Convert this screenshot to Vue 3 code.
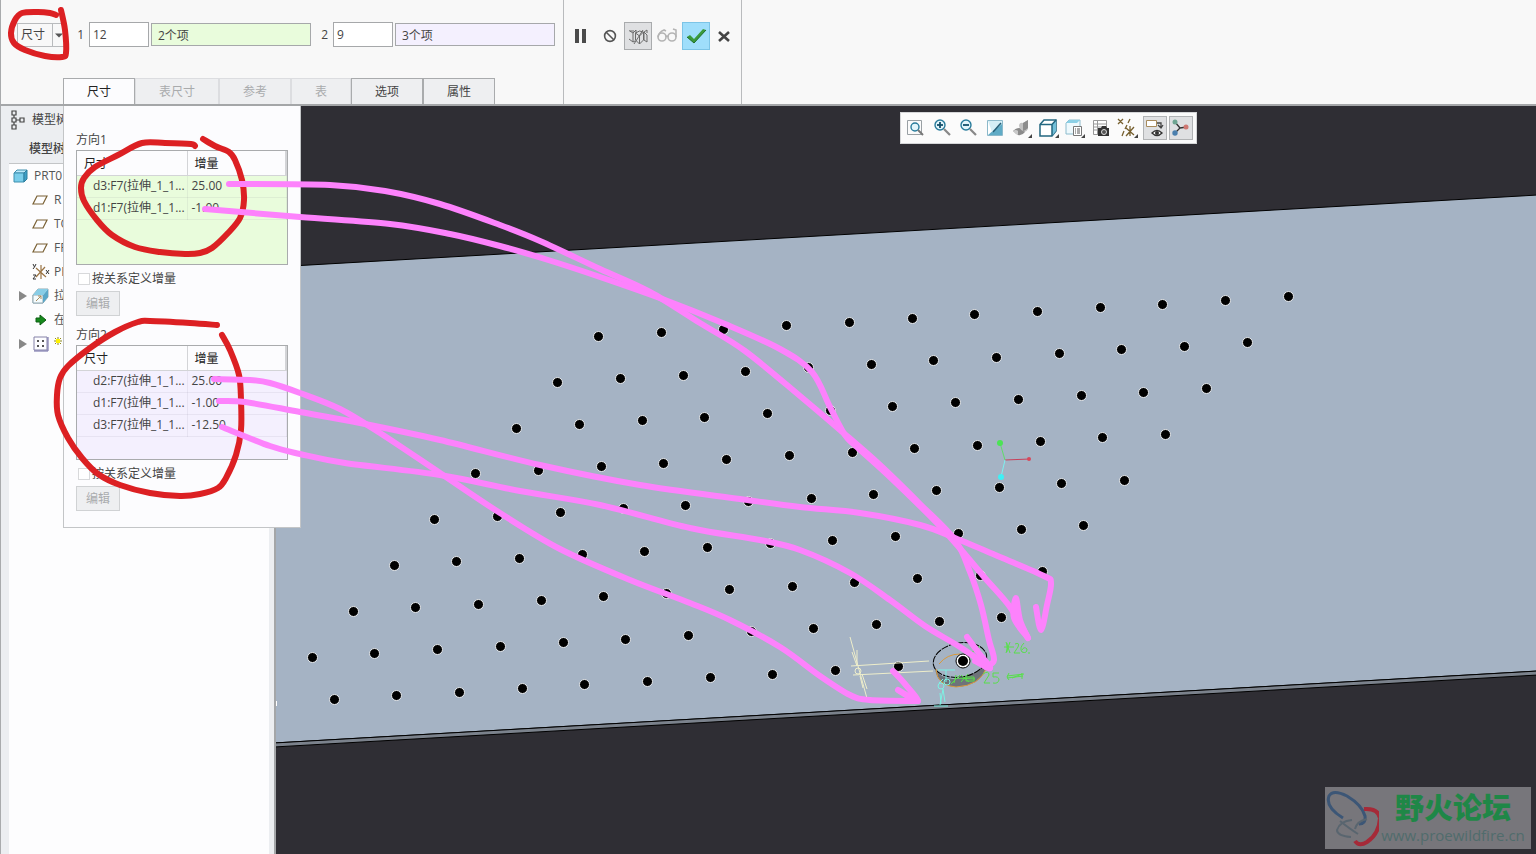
<script setup>
import { ref } from 'vue'

const mode = ref('尺寸')
const count1 = ref('12')
const count2 = ref('9')
const activeTab = ref('尺寸')

const tabs = [
  { name: '尺寸' },
  { name: '表尺寸', disabled: true },
  { name: '参考', disabled: true },
  { name: '表', disabled: true },
  { name: '选项' },
  { name: '属性' },
]

const directions = ref([
  {
    id: 1,
    title: '方向1',
    relation: false,
    rows: [
      ['d3:F7(拉伸_1_1...', '25.00'],
      ['d1:F7(拉伸_1_1...', '-1.00'],
    ],
  },
  {
    id: 2,
    title: '方向2',
    relation: false,
    rows: [
      ['d2:F7(拉伸_1_1...', '25.00'],
      ['d1:F7(拉伸_1_1...', '-1.00'],
      ['d3:F7(拉伸_1_1...', '-12.50'],
    ],
  },
])

const tree = [
  { icon: 'part', label: 'PRT0', root: true },
  { icon: 'plane', label: 'R' },
  { icon: 'plane', label: 'TO' },
  { icon: 'plane', label: 'FR' },
  { icon: 'csys', label: 'PR' },
  { icon: 'extrude', label: '拉', expand: true },
  { icon: 'insert', label: '在' },
  { icon: 'pattern', label: '', expand: true },
]

const views = [
  'refit', 'zoomin', 'zoomout', 'repaint', 'render', 'cube',
  'saved', 'manager', 'datum', 'annotation', 'spin',
]
const pressed = ['annotation', 'spin']
const withMenu = ['render', 'cube', 'saved', 'datum']

// pattern instances: 12 along the first direction, 9 along the second
const dots = []
for (let r = 0; r < 9; r++) {
  for (let c = 0; c < 12; c++) {
    if (r === 8 && (c === 0 || c === 11)) continue
    dots.push({
      x: Math.round(598 - 40.9 * r + 62.7 * c) + 0.5,
      y: Math.round(336 + 45.8 * r - 3.6 * c) + 0.5,
    })
  }
}

// Catmull-Rom through the points
function smooth(p) {
  let d = `M${p[0][0]} ${p[0][1]}`
  for (let i = 0; i < p.length - 1; i++) {
    const a = p[i - 1] || p[i]
    const b = p[i]
    const c = p[i + 1]
    const e = p[i + 2] || c
    d += `C${b[0] + (c[0] - a[0]) / 6} ${b[1] + (c[1] - a[1]) / 6}`
    d += ` ${c[0] - (e[0] - b[0]) / 6} ${c[1] - (e[1] - b[1]) / 6} ${c[0]} ${c[1]}`
  }
  return d
}

const redMarks = [
  [[56, 15], [50, 13], [38, 12], [22, 13], [15, 20], [11, 33], [14, 43], [25, 50], [45, 56], [62, 57], [66, 53], [65, 30], [61, 10]],
  [[195, 146], [191, 144], [165, 143], [142, 143], [118, 155], [95, 167], [84, 178], [81, 188], [84, 201], [97, 220], [112, 235], [135, 247], [160, 252], [185, 254], [200, 253], [212, 248], [228, 233], [240, 218], [244, 200], [242, 180], [235, 160], [229, 152], [215, 146], [203, 139]],
  [[217, 325], [190, 323], [150, 321], [138, 322], [115, 332], [90, 348], [68, 366], [60, 378], [57, 395], [58, 415], [68, 438], [82, 458], [98, 474], [120, 485], [150, 493], [180, 496], [200, 494], [218, 488], [226, 478], [236, 455], [241, 430], [241, 400], [239, 375], [230, 350], [222, 335]],
].map(smooth)

const pinkMarks = [
  [[229, 184], [330, 185], [385, 191], [440, 204], [500, 225], [540, 241], [600, 269], [650, 292], [700, 323], [745, 351], [800, 396], [840, 430], [880, 465], [920, 504], [955, 540], [970, 572], [981, 605], [989, 640], [994, 660], [986, 667]],
  [[205, 209], [300, 217], [390, 224], [450, 234], [500, 246], [545, 259], [600, 277], [665, 300], [725, 324], [780, 349], [812, 372], [830, 407], [845, 435], [857, 447], [890, 477], [930, 516], [957, 545], [985, 578], [1010, 607], [1028, 638]],
  [[1028, 638], [1020, 620], [1016, 598], [1014, 618], [1028, 638]],
  [[214, 379], [250, 380], [270, 383], [300, 393], [340, 409], [380, 433], [440, 473], [500, 513], [560, 549], [630, 580], [690, 603], [730, 620], [780, 647], [820, 676], [850, 695], [870, 700], [918, 701]],
  [[893, 671], [905, 684], [918, 701], [898, 690]],
  [[219, 401], [245, 402], [300, 412], [360, 423], [440, 440], [540, 465], [640, 485], [740, 499], [800, 507], [860, 513], [920, 525], [955, 538], [1000, 557], [1044, 576], [1051, 583], [1047, 605], [1041, 630], [1036, 607]],
  [[222, 427], [270, 446], [300, 454], [345, 463], [440, 475], [520, 491], [600, 505], [690, 528], [760, 540], [800, 550], [850, 573], [890, 600], [925, 626], [960, 647], [990, 668]],
  [[967, 637], [978, 652], [990, 668], [975, 661]],
].map(smooth)
</script>

<template>
  <div class="app">
    <header class="ribbon">
      <section class="dashboard">
        <div class="fields">
          <span class="combo">
            <select v-model="mode" aria-label="阵列类型">
              <option>尺寸</option>
            </select>
            <svg width="14" height="22" viewBox="0 0 14 22"><path d="M.5 0v22" stroke="#b9bbbd" /><path d="M3 9.500h8l-4 4z" fill="#555" /></svg>
          </span>
          <label for="count1">1</label>
          <input id="count1" v-model="count1" class="count">
          <input class="collector green" value="2个项" aria-label="方向 1 收集器" readonly>
          <label for="count2">2</label>
          <input id="count2" v-model="count2" class="count">
          <input class="collector violet" value="3个项" aria-label="方向 2 收集器" readonly>
        </div>
        <nav class="tabs">
          <button
            v-for="tab in tabs"
            :key="tab.name"
            :disabled="tab.disabled"
            :class="{ active: tab.name === activeTab }"
            @click="activeTab = tab.name"
          >{{ tab.name }}</button>
        </nav>
      </section>

      <section class="actions">
        <button aria-label="暂停"><svg width="28" height="28"><path d="M9 7h4v14H9zM16 7h4v14h-4z" fill="#4b4b4b" /></svg></button>
        <button aria-label="无预览"><svg width="28" height="28" fill="none" stroke="#555" stroke-width="1.600"><circle cx="15" cy="14" r="5.400" /><path d="M11 10l8 8" /></svg></button>
        <button class="pressed" aria-label="特征预览">
          <svg width="28" height="28" fill="none" stroke="#6b6b6b">
            <path d="M5 8.500l4 2.500v9l-4-3M9 11l3-3v3M6 9h4M11.500 11l4 3v8l-4-4zM15.500 14l4-4-4-1-4 2M15.500 22l4-4v-8M10 22L19 8M20 10l3-2v3M20 10v8l3 2v-7l-3-3M9 20l2-1" />
          </svg>
        </button>
        <button disabled aria-label="校验">
          <svg width="28" height="28" fill="none" stroke="#b4b4b4" stroke-width="1.600">
            <circle cx="9" cy="15" r="4" /><circle cx="19" cy="15" r="4" /><path d="M13 15q1-2 2 0M5 15q1-5 6-7l2 1M23 15V8l-3-1" />
          </svg>
        </button>
        <button class="ok" aria-label="确定"><svg width="28" height="28"><path d="M5 15l3-2 4 4L21 7l3 1-12 13z" fill="#3a9a3c" /><path d="M5 15l7 6L24 8" fill="none" stroke="#1f6f2b" /></svg></button>
        <button aria-label="取消"><svg width="28" height="28"><path d="M8 10l10 9M18 10L8 19" stroke="#444" stroke-width="2.600" /></svg></button>
      </section>
    </header>

    <main class="workspace">
      <aside class="sidebar">
        <div class="side-title">
          <svg width="14" height="20" viewBox="0 0 14 20" fill="none" stroke="#444" stroke-width="1.200"><path d="M1 1h4v4H1zM1 8h4v4H1zM1 15h4v4H1zM9 8h4v4H9zM3 5v3M3 12v3M5 10h4" /></svg>
          <span>模型树</span>
        </div>
        <div class="side-sub">模型树</div>
        <ul class="tree">
          <li v-for="(node, i) in tree" :key="i" :class="{ root: node.root }">
            <span v-if="!node.root" class="twist">
              <svg v-if="node.expand" width="8" height="10"><path d="M0 0l8 5-8 5z" fill="#888" /></svg>
            </span>
            <svg class="node-icon" width="18" height="18" viewBox="0 0 18 18" fill="none">
              <template v-if="node.icon === 'part'">
                <path d="M3 6l3-3h10l-3 3z" fill="#bdeafb" stroke="#3e8fae" /><path d="M3 6h10v9H3z" fill="#79cdea" stroke="#3e8fae" /><path d="M13 6l3-3v9l-3 3z" fill="#3d9fc6" stroke="#2f7f9e" />
              </template>
              <path v-else-if="node.icon === 'plane'" d="M5 5h10l-4 8H1z" stroke="#7a6135" stroke-width="1.200" />
              <template v-else-if="node.icon === 'csys'">
                <path d="M4 5l10 9M13 4L4 14M9 2v14" stroke="#9a7444" stroke-width="1.200" /><path d="M1 1l1.500 3L4 1M2.500 4L1 6M1 12h3l-3 4h3M14 7l3 4M17 7l-3 4" stroke="#333" />
              </template>
              <template v-else-if="node.icon === 'extrude'">
                <path d="M1 8l5-6h10v8l-5 6H1z" fill="#dff0f7" stroke="#91a8b1" /><path d="M1 8h10v8H1z" fill="#f4fbfd" stroke="#91a8b1" /><path d="M11 8l5-6v8l-5 6z" fill="#5aa7c8" /><path d="M1 8l5-6h10l-5 6z" fill="#88cde6" /><path d="M4 14l5-5M9 9v3M9 9H6" stroke="#a88b5c" />
              </template>
              <path v-else-if="node.icon === 'insert'" d="M4 7h4V4l6 5-6 5v-3H4z" fill="#168a1c" stroke="#0c5e12" />
              <template v-else>
                <path d="M2 2h13v13H2z" fill="#fdfdff" stroke="#8582a8" /><path d="M16 2v14H2" stroke="#6965a0" /><path d="M5 5h2v2H5zM10 5h2v2h-2zM5 10h2v2H5zM10 10h2v2h-2z" fill="#555" />
              </template>
            </svg>
            <svg v-if="node.icon === 'pattern'" class="spark" width="8" height="8"><path d="M4 0v8M0 4h8M1 1l6 6M7 1L1 7" stroke="#8f8a1c" /><path d="M2 2h4v4H2z" fill="#fff200" /></svg>
            <span>{{ node.label }}</span>
          </li>
        </ul>
      </aside>

      <section class="viewport">
        <svg class="scene" viewBox="276 106 1260 748" preserveAspectRatio="xMinYMin slice">
          <path d="M274 267L1538 195V671L274 743z" fill="#a5b3c4" stroke="#000" />
          <path d="M274 743L1538 671v4L274 747z" fill="#7b828c" stroke="#000" />
          <circle v-for="(dot, i) in dots" :key="i" :cx="dot.x" :cy="dot.y" r="5" fill="#000" stroke="#e8ebee" />
          <path d="M276.500 701v5" stroke="#fff" />

          <path d="M1005 460l25-1" stroke="#c8405a" /><circle cx="1029" cy="459" r="2" fill="#d8485a" />
          <path d="M1005 460l-5-17" stroke="#5fdc6a" /><circle cx="1000" cy="443" r="3" fill="#4be455" />
          <path d="M1005 460l-4 17" stroke="#7df0f0" /><circle cx="1001" cy="477" r="3" fill="#3ff0f5" />

          <path d="M935 668q2 18 21 19 26-1 31-22l-2-8q-11 21-32 22-14-2-17-9z" fill="#6e737a" />
          <ellipse cx="960" cy="660" rx="27" ry="17" fill="#a5b3c4" stroke="#000" stroke-dasharray="7 1" transform="rotate(-10 960 660)" />
          <path d="M936 669q1 17 20 18 24-1 31-20M939 664q8-10 21-10" fill="none" stroke="#d99a3c" />
          <circle cx="963" cy="661" r="7" fill="#fff" stroke="#000" /><circle cx="963" cy="661" r="5" fill="#000" />
          <g fill="none" stroke="#eeeecb">
            <path d="M850 637l18 65M851 666l78-5M853 675l80-4M857 666l-5-14M857 650v15M860 676l3 12M862 674l5 15" />
            <circle cx="858" cy="671" r="3" />
          </g>
          <g fill="none" stroke="#7df2e4">
            <path d="M934 706h14M938 670h17M946 670v12M940 705l3-16 2 13M939 683l4-4M941 704l-1-11" /><circle cx="941" cy="686" r="3" /><circle cx="947" cy="682" r="3" />
          </g>
          <g fill="none" stroke="#58df4b">
            <path d="M951 684l9-9M954 683l2-8M957 678l18 1M961 675l8 7M968 674l-7 8M966 677h8v4h-8zM1007 676l17-2M1007 678l16-2M1009 673l-2 4 2 3M1012 678l10-4M1022 673v6M1006 642l4 11M1004 647h10M1010 642l-4 11M1007 643v9M1015 644q5-2 3 3l-4 6h6M1024 643q-5 5-2 9 5 2 5-3-3-3-5 1M1029 652v2" />
            <path d="M983 674q6-4 6 1l-5 8h6M999 673h-6v4q6-1 6 3-1 4-6 3M970 654l10-8" />
          </g>
        </svg>

        <div class="view-bar">
          <button v-for="v in views" :key="v" :class="{ pressed: pressed.includes(v) }" :aria-label="v">
            <svg width="22" height="22" viewBox="0 0 22 22" fill="none">
              <template v-if="v === 'refit'">
                <path d="M2.500 3.500h14v14h-14z" stroke="#99a0a4" /><circle cx="10" cy="10" r="4" stroke="#287b9b" fill="#e3f5fb" stroke-width="1.400" /><path d="M13 13l5 5" stroke="#777" stroke-width="2" />
              </template>
              <template v-else-if="v === 'zoomin' || v === 'zoomout'">
                <circle cx="8" cy="8" r="5" stroke="#287b9b" fill="#e3f5fb" stroke-width="1.400" /><path d="M5 8h6" stroke="#14506a" stroke-width="1.800" /><path v-if="v === 'zoomin'" d="M8 5v6" stroke="#14506a" stroke-width="1.800" /><path d="M12 12l6 6" stroke="#888" stroke-width="2.200" />
              </template>
              <template v-else-if="v === 'repaint'">
                <path d="M2.500 3.500h15v15h-15z" fill="#fff" stroke="#8cb9ca" /><path d="M3 18L17 6v12z" fill="#5fabc6" /><path d="M3 4h14v3L7 15z" fill="#d3edf5" /><path d="M8 15l8-9" stroke="#235e77" stroke-width="1.500" />
              </template>
              <template v-else-if="v === 'render'">
                <path d="M2 14q3-3 6-3l6 1v3q-3 4-7 3z" fill="#8b8b8b" /><path d="M8 8q1-3 4-2l5-3v9q-2 4-5 2-4-2-4-6z" fill="#c2c2c2" /><path d="M12 6l5-3v8q-3 3-5 3z" fill="#8d8d8d" /><path d="M2 14q3-2 5 0v4q-3-1-5-4z" fill="#c9c9c9" />
              </template>
              <template v-else-if="v === 'cube'">
                <path d="M2 7.500L6 3h12v11l-4 5H2z" fill="#fff" stroke="#236780" stroke-width="1.500" /><path d="M14 7.500L18 3v11l-4 5z" fill="#72bfd8" /><path d="M2 7.500h12V19M14 7.500L18 3" stroke="#236780" stroke-width="1.500" />
              </template>
              <template v-else-if="v === 'saved'">
                <path d="M2 6l3-3h11v11l-3 3H2z" fill="#eef9fd" stroke="#8dbccd" /><path d="M2 6l3-3h11l-3 3z" fill="#8bd0e6" /><path d="M9.500 9.500h8v9h-8z" fill="#fff" stroke="#777" /><path d="M11 12h1M13 12h3M11 14h1M13 14h3M11 16h1M13 16h3" stroke="#555" />
              </template>
              <template v-else-if="v === 'manager'">
                <path d="M2.500 3.500h13v14h-13zM2 7h14M2 10h14M2 13h8M6.500 3v14" stroke="#999" fill="#fff" /><path d="M7 11h3l1-2h4l1 2h2v8H7z" fill="#333" /><circle cx="13" cy="15" r="2.500" stroke="#ddd" fill="#555" />
              </template>
              <template v-else-if="v === 'datum'">
                <path d="M1 2l5 5M6 2L1 7M13 2l-2 4M10 8l-2 4M7 14l-2 5M9 11l8 7M17 10l-8 9M13 9v10" stroke="#77602f" stroke-width="1.300" />
              </template>
              <template v-else-if="v === 'annotation'">
                <path d="M2.500 3.500h10v6h-10z" fill="#fff" stroke="#a88b5c" /><path d="M13 6h4v4M14 8l3 3 2-3" stroke="#444" stroke-width="1.300" /><path d="M8 16q5-5 10 0-5 5-10 0z" fill="#fff" stroke="#333" stroke-width="1.400" /><circle cx="13" cy="16" r="2" fill="#333" />
              </template>
              <template v-else>
                <path d="M5 5l5 6 7-1M10 11l-5 5" stroke="#333" stroke-width="1.300" /><circle cx="5" cy="5" r="2.500" fill="#6fa592" /><circle cx="16" cy="10" r="2.500" fill="#cf7772" /><circle cx="5" cy="16" r="2.700" fill="#4b7fae" />
              </template>
              <path v-if="withMenu.includes(v)" d="M21 17v4h-4z" fill="#444" />
            </svg>
          </button>
        </div>

        <div class="watermark">
          <svg width="54" height="60" viewBox="0 0 54 60" fill="none">
            <path d="M18 31Q0 20 4 9 8 2 22 9q15 9 18 20 1 8-6 8" stroke="#3c5676" stroke-width="3" />
            <path d="M40 22q14-1 16 9-1 16-13 24-8 5-12-1" stroke="#a52a38" stroke-width="4" transform="translate(-1 0)" />
            <path d="M26 50q-14-1-14-7 3-9 15-10M33 47q-8-5-18-13M30 42q2-8 12-10" stroke="#59656f" stroke-width="2" />
          </svg>
          <div class="mark-text">
            <strong>野火论坛</strong>
            <span>www.proewildfire.cn</span>
          </div>
        </div>
      </section>

      <form v-if="activeTab === '尺寸'" class="panel" @submit.prevent>
        <section v-for="dir in directions" :key="dir.id" class="direction">
          <h2>{{ dir.title }}</h2>
          <div class="grid" :class="dir.id === 1 ? 'green' : 'violet'">
            <table>
              <thead>
                <tr><th>尺寸</th><th>增量</th></tr>
              </thead>
              <tbody>
                <tr v-for="row in dir.rows" :key="row[0]">
                  <td>{{ row[0] }}</td>
                  <td>{{ row[1] }}</td>
                </tr>
              </tbody>
            </table>
          </div>
          <label class="check"><input v-model="dir.relation" type="checkbox">按关系定义增量</label>
          <button type="button" disabled>编辑</button>
        </section>
      </form>
    </main>

    <svg class="ink" width="1100" height="720" fill="none" stroke-width="6" stroke-linecap="round" stroke-linejoin="round">
      <path v-for="(d, i) in redMarks" :key="'r' + i" :d="d" stroke="#dc2023" />
      <path v-for="(d, i) in pinkMarks" :key="'p' + i" :d="d" stroke="#fd82fc" />
    </svg>
  </div>
</template>

<style>
body {
  margin: 0;
}
</style>

<style scoped>
.app {
  position: relative;
  display: flex;
  flex-direction: column;
  min-height: 100vh;
  overflow: hidden;
  background: #f8f8f8;
  color: #444;
  font: 12px/18px "Open Sans", "Noto Sans CJK SC", sans-serif;
}
* {
  box-sizing: border-box;
}
button, input, select {
  font: inherit;
  color: inherit;
  margin: 0;
  padding: 0;
  border: 0;
  border-radius: 0;
  background: none;
}
svg {
  display: block;
}
.green {
  background: #e9fcdc;
}
.violet {
  background: #f4f0fe;
}

/* ribbon */
.ribbon {
  display: flex;
  border-bottom: 2px solid #a4a6a8;
  border-left: 1px solid #a9abad;
}
.dashboard, .actions {
  padding-top: 22px;
  border-right: 1px solid #b9bbbd;
}
.dashboard {
  width: 563px;
  display: flex;
  flex-direction: column;
}
.fields {
  display: flex;
  align-items: center;
  gap: 2px;
  height: 25px;
  margin-bottom: 31px;
  padding-left: 16px;
}
.fields label {
  width: 18px;
  padding-right: 3px;
  text-align: right;
}
.combo {
  display: flex;
  width: 50px;
  height: 24px;
  border: 1px solid #b9bbbd;
}
.combo select {
  flex: 1;
  min-width: 0;
  appearance: none;
  padding-left: 3px;
}
.count, .collector {
  border: 1px solid #a6a8aa;
}
.count {
  width: 60px;
  height: 25px;
  padding-left: 3px;
  background: #fff;
}
.collector {
  width: 160px;
  height: 23px;
  padding-left: 6px;
}
.collector.green {
  background: #e9fcdc;
}
.collector.violet {
  background: #f4f0fe;
}
.tabs {
  display: flex;
  padding-left: 62px;
}
.tabs button {
  height: 26px;
  padding: 0 23px;
  border: 1px solid #a9abad;
  border-bottom: 0;
  background: #eeeff1;
}
.tabs button:disabled {
  color: #a9abad;
  border-color: #dcdde0;
}
.tabs .active {
  background: #fcfcfe;
  color: #222;
}
.actions {
  display: flex;
  align-items: flex-start;
  gap: 1px;
  width: 178px;
  padding-left: 2px;
}
.actions button {
  width: 28px;
  height: 28px;
}
.actions .pressed {
  background: #dfe0e2;
  box-shadow: inset 0 0 0 1px #a9abad;
}
.actions .ok {
  background: #9fdefb;
  box-shadow: inset 0 0 0 1px #7cc4e6;
}

/* workspace */
.workspace {
  position: relative;
  flex: 1;
  display: flex;
}
.sidebar {
  width: 276px;
  display: flex;
  flex-direction: column;
  padding: 0 5px 0 8px;
  background: #eceef1;
  border-left: 1px solid #a9abad;
  border-right: 2px solid #a4a6a8;
}
.side-title {
  display: flex;
  align-items: center;
  gap: 7px;
  height: 27px;
  padding-left: 2px;
}
.side-sub {
  height: 30px;
  padding: 7px 0 0 20px;
  font-weight: 500;
}
.tree {
  flex: 1;
  margin: 0;
  padding: 0;
  list-style: none;
  background: #fdfdfe;
  border-top: 1px solid #c3c5c7;
}
.tree li {
  display: flex;
  align-items: center;
  gap: 4px;
  height: 24px;
  padding-left: 10px;
  color: #555;
}
.tree .root {
  gap: 5px;
  padding-left: 2px;
}
.twist {
  width: 9px;
}
.spark {
  margin-bottom: 6px;
}
.viewport {
  position: relative;
  flex: 1;
  overflow: hidden;
  background: #2f2e34;
}
.scene {
  position: absolute;
  inset: 0;
  width: 100%;
  height: 100%;
}
.view-bar {
  position: absolute;
  top: 6px;
  left: 624px;
  display: flex;
  justify-content: space-between;
  width: 297px;
  padding: 3px;
  background: #fbfbfb;
  border: 1px solid #d5d6d8;
}
.view-bar button {
  display: grid;
  place-items: center;
  width: 24px;
  height: 24px;
}
.view-bar .pressed {
  background: #dfe0e2;
  box-shadow: inset 0 0 0 1px #b1b3b5;
}
.watermark {
  position: absolute;
  right: 5px;
  bottom: 5px;
  display: flex;
  width: 206px;
  height: 62px;
  background: #77767b;
}
.mark-text {
  display: flex;
  flex-direction: column;
  align-items: center;
  flex: 1;
  padding-right: 4px;
  white-space: nowrap;
}
.mark-text strong {
  font-size: 29px;
  line-height: 39px;
  color: #1f8747;
  font-family: "Noto Sans CJK SC", sans-serif;
  font-weight: 900;
}
.mark-text span {
  font-size: 15px;
  line-height: 19px;
  color: #506c6c;
}

/* slide-down panel */
.panel {
  position: absolute;
  top: 0;
  left: 63px;
  width: 238px;
  padding: 25px 12px 6px;
  background: #fcfcfe;
  border: 1px solid #c3c5c7;
  border-top: 0;
}
.direction {
  margin-bottom: 10px;
}
.direction h2 {
  margin: 0 0 1px;
  font-size: 12px;
  font-weight: 400;
}
.grid {
  height: 115px;
  border: 1px solid #a9abad;
}
.grid table {
  width: 100%;
  border-collapse: collapse;
  table-layout: fixed;
}
.grid th {
  height: 24px;
  padding: 3px 7px 0;
  text-align: left;
  font-weight: 400;
  color: #222;
  background: #fcfcfe;
  border-right: 2px solid #d3d4d7;
  border-bottom: 1px solid #d3d4d7;
}
.grid th:first-child {
  width: 110px;
  border-right-width: 1px;
}
.grid td {
  height: 22px;
  padding: 0 4px;
  white-space: nowrap;
  border-right: 1px solid rgba(120, 120, 140, .1);
  border-bottom: 1px solid rgba(120, 120, 140, .1);
}
.grid td:first-child {
  padding: 0 0 0 16px;
}
.check {
  display: flex;
  align-items: center;
  gap: 2px;
  height: 17px;
  margin: 5px 0 4px;
  padding-left: 2px;
}
.check input {
  appearance: none;
  width: 12px;
  height: 12px;
  background: #fff;
  border: 1px solid #d8d9db;
}
.direction button {
  width: 44px;
  height: 25px;
  color: #a9abad;
  background: #eeeff1;
  border: 1px solid #d0d2d4;
}
.ink {
  position: absolute;
  top: 0;
  left: 0;
  pointer-events: none;
}
</style>
